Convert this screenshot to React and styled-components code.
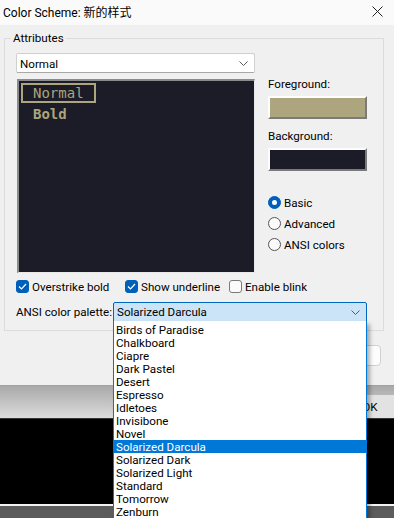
import styled, { createGlobalStyle } from "styled-components";

const GlobalStyle = createGlobalStyle`
  html, body {
    margin: 0;
    padding: 0;
    background: #000;
  }
  body {
    font-family: Roboto, "Noto Sans CJK SC", sans-serif;
    font-size: 11.6px;
    color: #000;
  }
`;

const Page = styled.div`
  position: relative;
  width: 394px;
  height: 518px;
  overflow: hidden;
  display: flex;
  flex-direction: column;
  white-space: nowrap;
`;

const Dialog = styled.div`
  height: 386px;
  background: #f0f0f0;
  display: flex;
  flex-direction: column;
  border-bottom: 1px solid #a0a0a0;
  box-sizing: border-box;
`;

const TitleBar = styled.div`
  height: 25px;
  flex: none;
  box-sizing: border-box;
  background: #fafafa;
  display: flex;
  align-items: center;
  justify-content: space-between;
  padding: 0 11px 3px 3px;
  font-size: 12px;
`;

const Body = styled.div`
  padding: 6px 10px 0 4px;
  display: flex;
  flex-direction: column;
`;

const Group = styled.fieldset`
  margin: 0;
  padding: 0;
  border: 1px solid #dcdcdc;
  height: 300px;
  box-sizing: border-box;
`;

const Legend = styled.legend`
  margin-left: 6px;
  padding: 0 2px;
  line-height: 15px;
`;

const GroupInner = styled.div`
  padding: 7px 11px 0 11px;
  display: flex;
  flex-direction: column;
`;

const Columns = styled.div`
  display: grid;
  grid-template-columns: 239px 99px;
  column-gap: 13px;
`;

const LeftCol = styled.div`
  display: flex;
  flex-direction: column;
  gap: 6px;
`;

const RightCol = styled.div`
  display: flex;
  flex-direction: column;
`;

const Select = styled.div`
  height: 20px;
  width: ${(p) => p.width}px;
  flex: none;
  box-sizing: border-box;
  display: flex;
  align-items: center;
  justify-content: space-between;
  padding: 1px 6px 0 3px;
  background: ${(p) => (p.focused ? "#cce4f7" : "#fff")};
  border: 1px solid ${(p) => (p.focused ? "#0067c0" : "#cfcfcf")};
  border-bottom-color: ${(p) => (p.focused ? "#0067c0" : "#a8a8a8")};
  border-radius: ${(p) => (p.focused ? "2px 2px 0 0" : "2px")};
`;

const Preview = styled.div`
  height: 194px;
  margin-left: 1px;
  width: 238px;
  box-sizing: border-box;
  background: #1b1c27;
  border-top: 2px solid #8a8a8a;
  border-left: 2px solid #8a8a8a;
  border-right: 1px solid #e8e8e8;
  border-bottom: 1px solid #e8e8e8;
  padding: 2px 0 0 2px;
  display: flex;
  flex-direction: column;
  align-items: flex-start;
  font-family: "DejaVu Sans Mono", "Liberation Mono", monospace;
  font-size: 14px;
  color: #aca57d;
`;

const SampleLine = styled.div`
  box-sizing: border-box;
  height: 20px;
  line-height: 16px;
  padding: 0 10px 0 10px;
  border: 2px solid ${(p) => (p.selected ? "#aca57d" : "transparent")};
  font-weight: ${(p) => (p.bold ? 700 : 400)};
  margin-top: ${(p) => p.top || 0}px;
`;

const FieldLabel = styled.div`
  line-height: 15px;
  padding-top: 1px;
  margin-top: ${(p) => p.top}px;
`;

const Swatch = styled.div`
  height: 23px;
  margin-top: 4px;
  box-sizing: border-box;
  background: ${(p) => p.color};
  border-top: 2px solid #fdfdfd;
  border-left: 2px solid #fdfdfd;
  border-right: 2px solid #7a7a7a;
  border-bottom: 2px solid #7a7a7a;
`;

const RadioList = styled.div`
  margin-top: 21px;
  display: flex;
  flex-direction: column;
`;

const RadioRow = styled.div`
  height: 21px;
  display: flex;
  align-items: center;
  gap: 3px;
`;

const RadioDot = styled.span`
  width: 13px;
  height: 13px;
  box-sizing: border-box;
  border-radius: 50%;
  flex: none;
  background: ${(p) => (p.checked ? "#005fb8" : "#fafafa")};
  border: 1px solid ${(p) => (p.checked ? "#005fb8" : "#555")};
  display: flex;
  align-items: center;
  justify-content: center;
  &::after {
    content: "";
    display: ${(p) => (p.checked ? "block" : "none")};
    width: 5px;
    height: 5px;
    border-radius: 50%;
    background: #fff;
  }
`;

const CheckRow = styled.div`
  margin-top: 5px;
  height: 17px;
  display: flex;
  align-items: center;
`;

const CheckItem = styled.label`
  display: flex;
  align-items: center;
  gap: 3px;
  flex: none;
  width: ${(p) => (p.width ? `${p.width}px` : "auto")};
`;

const CheckBox = styled.span`
  width: 13px;
  height: 13px;
  box-sizing: border-box;
  flex: none;
  border-radius: 3px;
  background: ${(p) => (p.checked ? "#005fb8" : "#fbfbfb")};
  border: 1px solid ${(p) => (p.checked ? "#005fb8" : "#7a7a7a")};
  display: flex;
  align-items: center;
  justify-content: center;
`;

const PaletteRow = styled.div`
  margin-top: 6px;
  height: 21px;
  display: grid;
  grid-template-columns: 97px 254px;
  align-items: center;
`;

const FooterRow = styled.div`
  display: flex;
  justify-content: flex-end;
  padding: 14px 3px 0 0;
`;

const DialogButton = styled.div`
  width: 75px;
  height: 21px;
  box-sizing: border-box;
  background: #fdfdfd;
  border: 1px solid #d0d0d0;
  border-radius: 4px;
`;

const Toolbar = styled.div`
  height: 32px;
  flex: none;
  background: linear-gradient(#a9a9a9, #dcdcdc);
  display: flex;
  justify-content: flex-end;
`;

const ToolButton = styled.div`
  margin-top: 9px;
  width: 60px;
  margin-right: -6px;
  background: #e2e2e2;
  display: flex;
  align-items: center;
  justify-content: center;
`;

const Console = styled.div`
  flex: 1;
  background: #000;
  border-top: 1px solid #333;
`;

const StatusStrip = styled.div`
  height: 12px;
  flex: none;
  background: #5c5c5c;
  border-top: 2px solid #f4f4f4;
`;

const DropList = styled.div`
  position: absolute;
  left: 113px;
  top: 321px;
  width: 254px;
  box-sizing: border-box;
  background: #fff;
  border: 1px solid #0078d7;
  border-top: none;
  padding-top: 2px;
  box-shadow: 3px 3px 4px rgba(0, 0, 0, 0.3);
`;

const DropItem = styled.div`
  height: 13px;
  line-height: 14px;
  padding-left: 2px;
  background: ${(p) => (p.selected ? "#0078d7" : "transparent")};
  color: ${(p) => (p.selected ? "#fff" : "#000")};
`;

const Chevron = () => (
  <svg width="9" height="5" viewBox="0 0 9 5">
    <polyline points="0.5,0.5 4.5,4.5 8.5,0.5" fill="none" stroke="#5a5a5a" strokeWidth="1" />
  </svg>
);

const CheckMark = () => (
  <svg width="9" height="7" viewBox="0 0 9 7">
    <polyline points="1,3.5 3.5,6 8,1" fill="none" stroke="#fff" strokeWidth="1.2" />
  </svg>
);

const CloseIcon = () => (
  <svg width="11" height="11" viewBox="0 0 11 11">
    <path d="M0.5 0.5 L10.5 10.5 M10.5 0.5 L0.5 10.5" stroke="#222" strokeWidth="1" />
  </svg>
);

const palettes = [
  "Birds of Paradise",
  "Chalkboard",
  "Ciapre",
  "Dark Pastel",
  "Desert",
  "Espresso",
  "Idletoes",
  "Invisibone",
  "Novel",
  "Solarized Darcula",
  "Solarized Dark",
  "Solarized Light",
  "Standard",
  "Tomorrow",
  "Zenburn",
];

const radios = [
  { label: "Basic", checked: true },
  { label: "Advanced" },
  { label: "ANSI colors" },
];

const checks = [
  { label: "Overstrike bold", checked: true, width: 109 },
  { label: "Show underline", checked: true, width: 104 },
  { label: "Enable blink" },
];

export default function App() {
  const current = "Solarized Darcula";
  return (
    <Page>
      <GlobalStyle />
      <Dialog>
        <TitleBar>
          <span>Color Scheme: 新的样式</span>
          <CloseIcon />
        </TitleBar>
        <Body>
          <Group>
            <Legend>Attributes</Legend>
            <GroupInner>
              <Columns>
                <LeftCol>
                  <Select width={239}>
                    <span>Normal</span>
                    <Chevron />
                  </Select>
                  <Preview>
                    <SampleLine selected>Normal</SampleLine>
                    <SampleLine bold top={1}>Bold</SampleLine>
                  </Preview>
                </LeftCol>
                <RightCol>
                  <FieldLabel top={23}>Foreground:</FieldLabel>
                  <Swatch color="#aca57d" />
                  <FieldLabel top={9}>Background:</FieldLabel>
                  <Swatch color="#1b1c27" />
                  <RadioList>
                    {radios.map((r) => (
                      <RadioRow key={r.label}>
                        <RadioDot checked={r.checked} />
                        <span>{r.label}</span>
                      </RadioRow>
                    ))}
                  </RadioList>
                </RightCol>
              </Columns>
              <CheckRow>
                {checks.map((c) => (
                  <CheckItem key={c.label} width={c.width}>
                    <CheckBox checked={c.checked}>{c.checked && <CheckMark />}</CheckBox>
                    <span>{c.label}</span>
                  </CheckItem>
                ))}
              </CheckRow>
              <PaletteRow>
                <span>ANSI color palette:</span>
                <Select width={254} focused>
                  <span>{current}</span>
                  <Chevron />
                </Select>
              </PaletteRow>
            </GroupInner>
          </Group>
          <FooterRow>
            <DialogButton />
          </FooterRow>
        </Body>
      </Dialog>
      <Toolbar>
        <ToolButton>OK</ToolButton>
      </Toolbar>
      <Console />
      <StatusStrip />
      <DropList>
        {palettes.map((name) => (
          <DropItem key={name} selected={name === current}>
            {name}
          </DropItem>
        ))}
      </DropList>
    </Page>
  );
}
